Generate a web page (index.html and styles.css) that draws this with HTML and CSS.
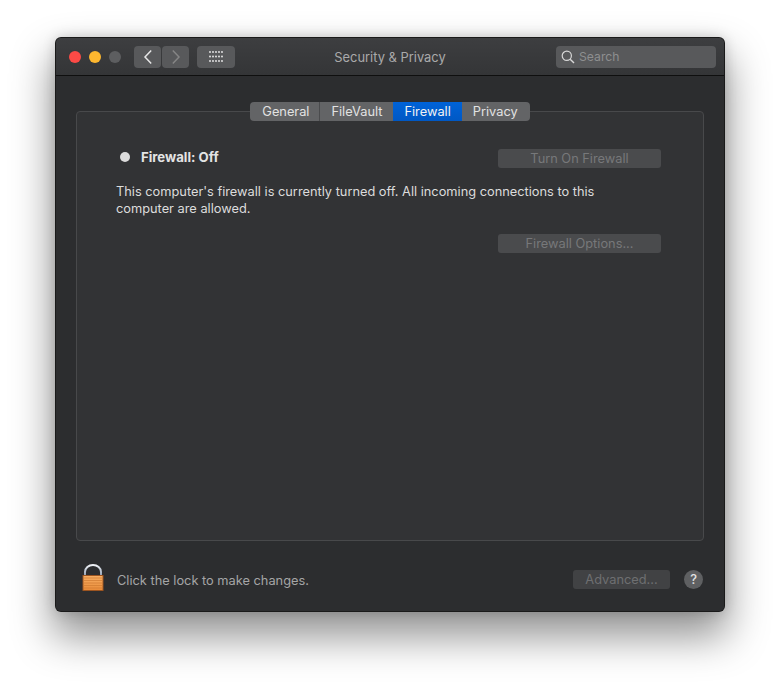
FILE: index.html
```html
<!DOCTYPE html>
<html lang="en">
<head>
<meta charset="utf-8">
<title>Security &amp; Privacy</title>
<link rel="stylesheet" href="styles.css">
</head>
<body>
<div class="window">
  <header class="titlebar">
    <div class="lights">
      <span class="light red"></span>
      <span class="light yellow"></span>
      <span class="light off"></span>
    </div>
    <div class="nav">
      <button class="tool nav-btn" aria-label="Back">
        <svg width="10" height="16" viewBox="0 0 10 16"><path d="M8.200 1.500 2 8l6.200 6.500" fill="none" stroke="#e6e6e6" stroke-width="1.5"/></svg>
      </button>
      <button class="tool nav-btn" aria-label="Forward">
        <svg width="10" height="16" viewBox="0 0 10 16"><path d="M1.800 1.500 8 8l-6.200 6.500" fill="none" stroke="#858585" stroke-width="1.5"/></svg>
      </button>
    </div>
    <button class="tool grid-btn" aria-label="Show All">
      <svg width="14" height="11" viewBox="0 0 14 11" fill="#eee">
        <circle cx="1" cy="1" r=".9"/><circle cx="4" cy="1" r=".9"/><circle cx="7" cy="1" r=".9"/><circle cx="10" cy="1" r=".9"/><circle cx="13" cy="1" r=".9"/>
        <circle cx="1" cy="5.500" r=".9"/><circle cx="4" cy="5.500" r=".9"/><circle cx="7" cy="5.500" r=".9"/><circle cx="10" cy="5.500" r=".9"/><circle cx="13" cy="5.500" r=".9"/>
        <circle cx="1" cy="10" r=".9"/><circle cx="4" cy="10" r=".9"/><circle cx="7" cy="10" r=".9"/><circle cx="10" cy="10" r=".9"/><circle cx="13" cy="10" r=".9"/>
      </svg>
    </button>
    <h1 class="title">Security &amp; Privacy</h1>
    <div class="search">
      <svg width="14" height="14" viewBox="0 0 14 14"><circle cx="5.800" cy="5.800" r="4.600" fill="none" stroke="#d8d8d8" stroke-width="1.2"/><path d="M9.200 9.200 13 13" stroke="#d8d8d8" stroke-width="1.4"/></svg>
      <span class="search-text">Search</span>
    </div>
  </header>
  <main class="content">
    <nav class="tabs">
      <span class="tab sep">General</span>
      <span class="tab">FileVault</span>
      <span class="tab active">Firewall</span>
      <span class="tab last">Privacy</span>
    </nav>
    <section class="panel">
      <div class="status-row">
        <div class="status">
          <span class="dot"></span>
          <strong class="status-label">Firewall: Off</strong>
        </div>
        <button class="btn wide">Turn On Firewall</button>
      </div>
      <p class="desc">This computer's firewall is currently turned off. All incoming connections to this computer are allowed.</p>
      <div class="options-row">
        <button class="btn wide">Firewall Options...</button>
      </div>
    </section>
    <footer class="footer">
      <svg class="lock" width="22" height="27" viewBox="0 0 22 27">
        <defs>
          <linearGradient id="body" x1="0" y1="0" x2="0" y2="1"><stop offset="0" stop-color="#f7b066"/><stop offset="1" stop-color="#e98b38"/></linearGradient>
          <linearGradient id="shackle" x1="0" y1="0" x2="0" y2="1"><stop offset="0" stop-color="#f0f3f7"/><stop offset="1" stop-color="#8e9cb0"/></linearGradient>
        </defs>
        <path d="M3 12V8a8 7 0 0 1 16 0v4" fill="none" stroke="url(#shackle)" stroke-width="2"/>
        <rect x="1" y="11.500" width="20" height="15" fill="url(#body)" stroke="#9c5420"/>
        <path d="M1.500 14h19M1.500 16.500h19M1.500 19h19M1.500 21.500h19M1.500 24h19" stroke="#cf7a30" stroke-width=".7"/>
      </svg>
      <span class="lock-text">Click the lock to make changes.</span>
      <button class="btn advanced">Advanced...</button>
      <span class="help">?</span>
    </footer>
  </main>
</div>
</body>
</html>
```

FILE: styles.css
```css
* { box-sizing: border-box; }
html, body { margin: 0; height: 100%; }
body {
  padding: 38px 56px 0;
  background: #fff;
  font-family: Inter, "Liberation Sans", sans-serif;
  font-size: 12.8px;
  overflow: hidden;
}
button { font: inherit; border: 0; padding: 0; }
.window {
  width: 668px;
  height: 573px;
  border-radius: 5px;
  background: #2d2e30;
  box-shadow: 0 0 0 1px #1a1a1a, 0 22px 40px 4px rgba(0,0,0,.42), 0 0 14px rgba(0,0,0,.2);
  overflow: hidden;
  display: flex;
  flex-direction: column;
}
.titlebar {
  height: 38px;
  flex: none;
  background: linear-gradient(#3d3e40, #343537);
  border-bottom: 1px solid #0f0f0f;
  display: flex;
  align-items: center;
  padding: 0 8px 0 13px;
  position: relative;
}
.lights { display: flex; gap: 8px; margin-right: 13px; }
.light { width: 12px; height: 12px; border-radius: 50%; }
.red { background: #fc4a46; }
.yellow { background: #fdb72f; }
.off { background: #5d5e60; }
.nav { display: flex; gap: 1px; margin-right: 8px; }
.tool {
  height: 22px;
  border-radius: 4px;
  background: #58595b;
  display: flex;
  align-items: center;
  justify-content: center;
}
.nav-btn { width: 27px; }
.grid-btn { width: 38px; }
.title {
  position: absolute;
  left: 0;
  right: 0;
  top: 12px;
  margin: 0;
  text-align: center;
  font-size: 12.9px;
  font-weight: 400;
  color: #a9a9aa;
  pointer-events: none;
}
.search {
  margin-left: auto;
  width: 160px;
  height: 22px;
  border-radius: 4px;
  background: #58595b;
  display: flex;
  align-items: center;
  gap: 4px;
  padding-left: 5px;
}
.search-text { font-size: 12.2px; color: #8e8f90; }
.content {
  flex: 1;
  padding: 26px 20px 0;
  display: flex;
  flex-direction: column;
  background: #2c2d2f;
}
.tabs {
  align-self: center;
  display: flex;
  height: 19px;
  margin-bottom: -10px;
  border-radius: 4px;
  overflow: hidden;
  background: #636466;
  position: relative;
  z-index: 1;
  color: #e2e2e2;
  line-height: 19px;
}
.tab { padding: 0 11px; }
.sep { border-right: 1px solid #4a4b4d; padding: 0 10px 0 12px; }
.last { padding: 0 12px 0 11px; }
.active { background: linear-gradient(#0063d8, #0058c4); color: #f2f2f2; }
.panel {
  height: 430px;
  flex: none;
  border: 1px solid #48494b;
  border-radius: 4px;
  background: #323335;
  padding: 37px 42px 0 39px;
}
.status-row {
  height: 19px;
  display: flex;
  justify-content: space-between;
  align-items: center;
}
.status { display: flex; align-items: center; gap: 11px; padding: 0 0 4px 4px; }
.dot { width: 10px; height: 10px; border-radius: 50%; background: #dcdcdc; }
.status-label { font-weight: 700; font-size: 13.2px; color: #e4e4e4; }
.btn {
  height: 19px;
  border-radius: 3px;
  background: #4a4b4d;
  color: #77787a;
  text-align: center;
  padding-bottom: 1px;
}
.wide { width: 163px; }
.desc {
  margin: 15px 0 0;
  width: 500px;
  line-height: 17px;
  color: #dcdcdc;
}
.options-row { display: flex; justify-content: flex-end; margin-top: 17px; }
.footer {
  flex: 1;
  display: flex;
  align-items: center;
  padding: 7px 1px 0 6px;
}
.lock { margin-right: 13px; margin-bottom: 4px; }
.lock-text { color: #a5a5a6; padding-top: 2px; }
.advanced { width: 97px; margin-left: auto; background: #414244; color: #6e6f71; }
.help {
  width: 19px;
  height: 19px;
  margin-left: 14px;
  border-radius: 50%;
  background: #5f6062;
  color: #e2e2e2;
  text-align: center;
  line-height: 19px;
  font-weight: 500;
}
```
